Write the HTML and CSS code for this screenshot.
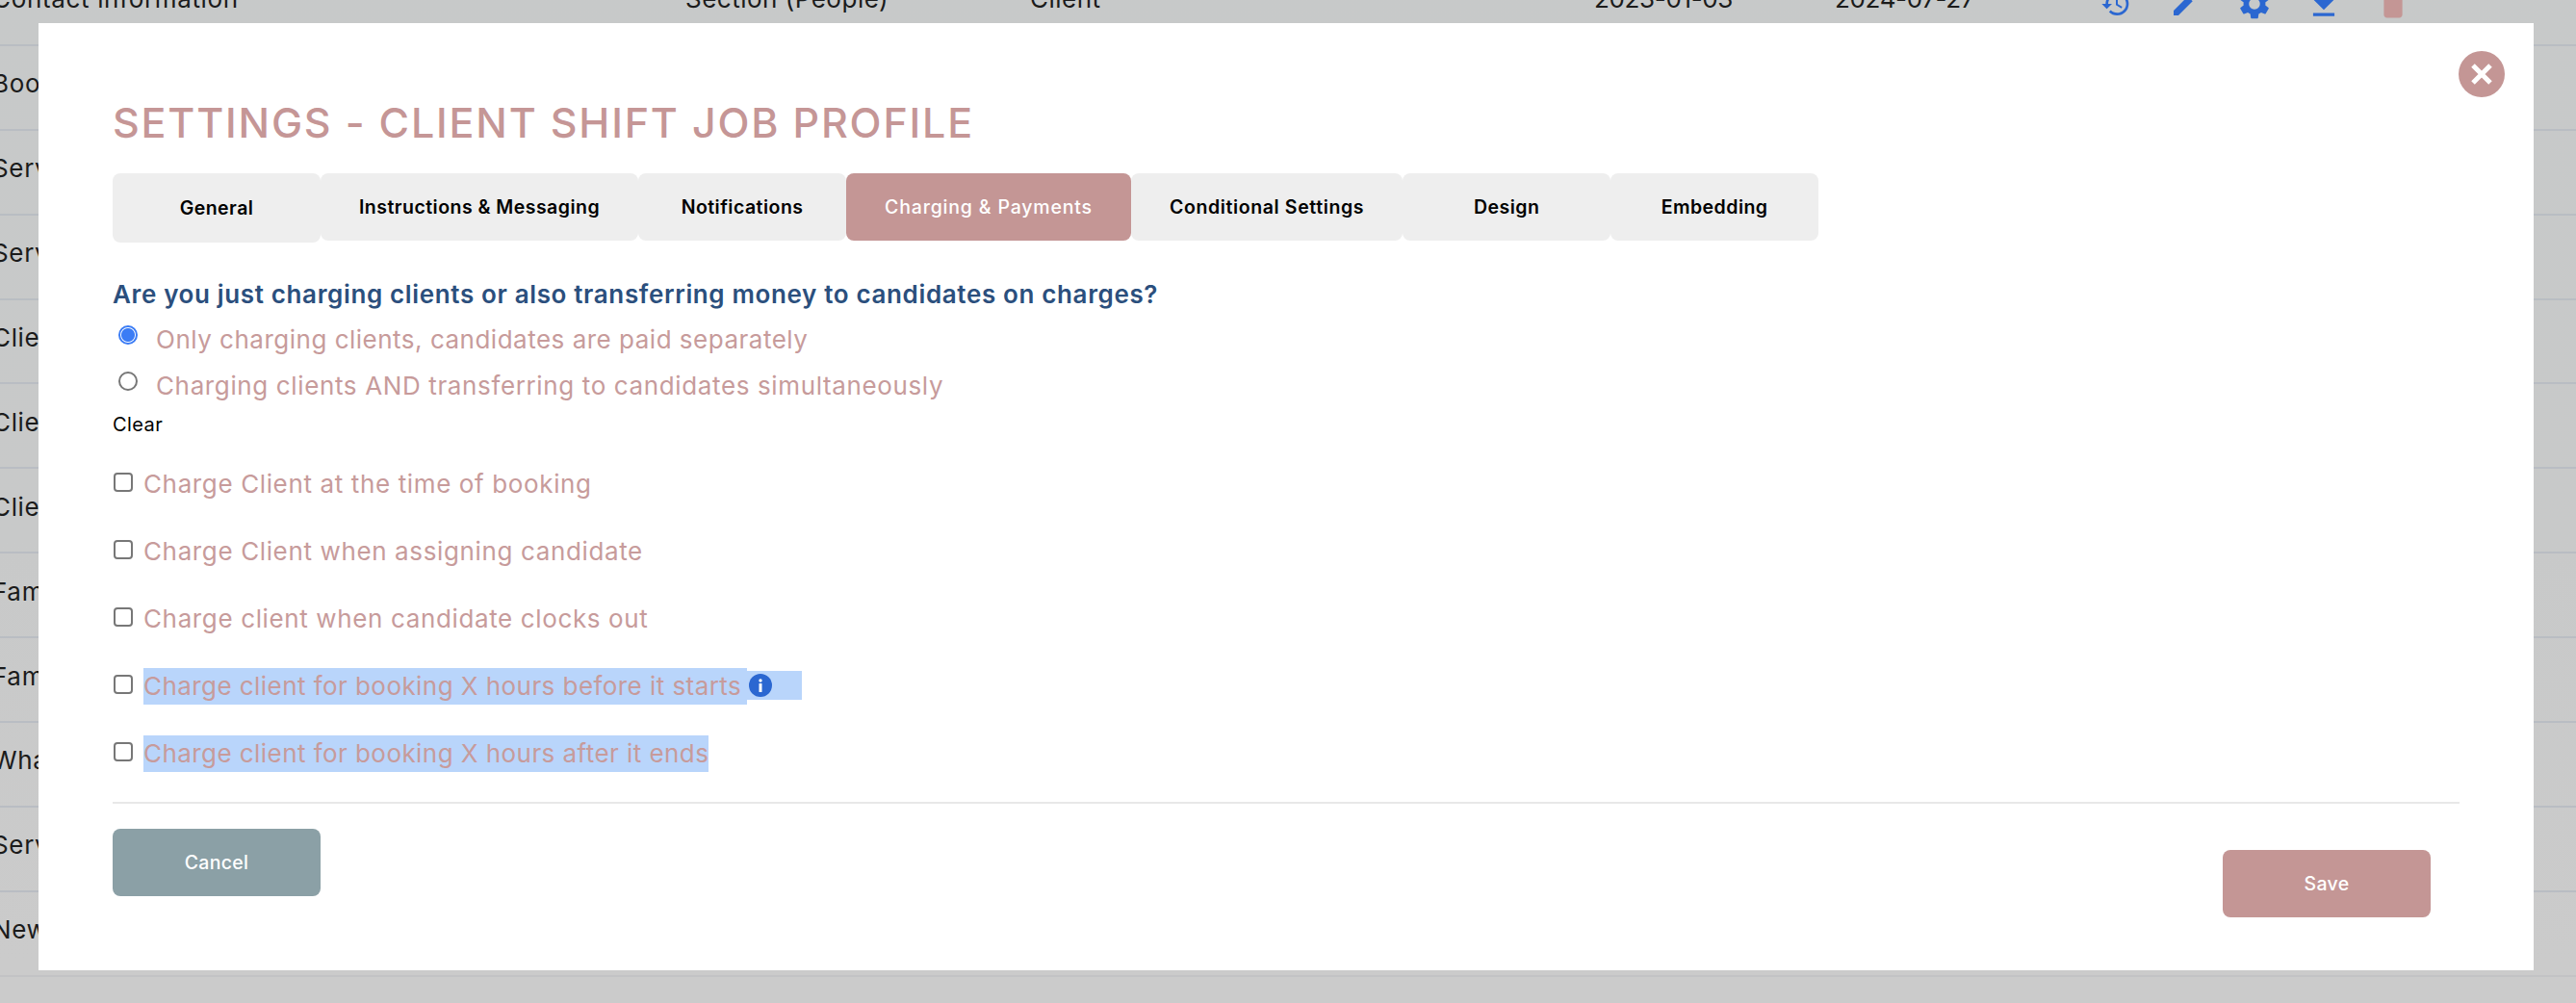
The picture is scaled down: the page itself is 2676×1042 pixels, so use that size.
FILE: index.html
```html
<!DOCTYPE html>
<html lang="en">
<head>
<meta charset="utf-8">
<title>Settings - Client Shift Job Profile</title>
<link rel="stylesheet" href="styles.css">
</head>
<body>
<main class="table">
  <div class="row">
    <span>Contact information</span><span>Section (People)</span><span>Client</span><span class="date">2023-01-03</span><span class="date">2024-07-27</span>
    <div class="icons">
      <svg class="ic" viewBox="0 0 24 24"><path d="M13 3a9 9 0 0 0-9 9H1l3.89 3.89.07.14L9 12H6c0-3.87 3.13-7 7-7s7 3.13 7 7-3.13 7-7 7c-1.93 0-3.68-.79-4.94-2.06l-1.42 1.42A8.954 8.954 0 0 0 13 21a9 9 0 0 0 0-18zm-1 5v5l4.28 2.54.72-1.21-3.5-2.08V8H12z"/></svg>
      <svg class="ic" viewBox="0 0 24 24"><path d="M3 17.25V21h3.75L17.81 9.94l-3.75-3.75L3 17.25zM20.71 7.04a1 1 0 0 0 0-1.41l-2.34-2.34a1 1 0 0 0-1.41 0l-1.83 1.83 3.75 3.75 1.83-1.83z"/></svg>
      <svg class="ic ic-big" viewBox="0 0 24 24"><path d="M19.14 12.94c.04-.3.06-.61.06-.94 0-.32-.02-.64-.07-.94l2.03-1.58a.49.49 0 0 0 .12-.61l-1.92-3.32a.488.488 0 0 0-.59-.22l-2.39.96c-.5-.38-1.03-.7-1.62-.94l-.36-2.54a.484.484 0 0 0-.48-.41h-3.84c-.24 0-.43.17-.47.41l-.36 2.54c-.59.24-1.13.57-1.62.94l-2.39-.96c-.22-.08-.47 0-.59.22L2.74 8.87c-.12.21-.08.47.12.61l2.03 1.58c-.05.3-.09.63-.09.94s.02.64.07.94l-2.03 1.58a.49.49 0 0 0-.12.61l1.92 3.32c.12.22.37.29.59.22l2.39-.96c.5.38 1.03.7 1.62.94l.36 2.54c.05.24.24.41.48.41h3.84c.24 0 .44-.17.47-.41l.36-2.54c.59-.24 1.13-.56 1.62-.94l2.39.96c.22.08.47 0 .59-.22l1.92-3.32c.12-.22.07-.47-.12-.61l-2.01-1.58zM12 15.6c-1.98 0-3.6-1.62-3.6-3.6s1.62-3.6 3.6-3.6 3.6 1.62 3.6 3.6-1.62 3.6-3.6 3.6z"/></svg>
      <svg class="ic ic-big" viewBox="0 0 24 24"><path d="M19 9h-4V3H9v6H5l7 7 7-7zM5 18v2h14v-2H5z"/></svg>
      <svg class="ic ic-del" viewBox="2 2 20 20"><path d="M6 19c0 1.1.9 2 2 2h8c1.1 0 2-.9 2-2V7H6v12zM19 4h-3.500l-1-1h-5l-1 1H5v2h14V4z"/></svg>
    </div>
  </div>
  <div class="row"><span>Booking</span></div>
  <div class="row"><span>Services</span></div>
  <div class="row"><span>Services</span></div>
  <div class="row"><span>Client</span></div>
  <div class="row"><span>Client</span></div>
  <div class="row"><span>Client</span></div>
  <div class="row"><span>Family</span></div>
  <div class="row"><span>Family</span></div>
  <div class="row"><span>What</span></div>
  <div class="row"><span>Services</span></div>
  <div class="row row-end"><span>New</span></div>
  <div class="row row-faded">
    <span></span><span></span><span></span><span></span><span></span>
    <div class="icons">
      <svg class="ic" viewBox="0 0 24 24"><path d="M13 3a9 9 0 0 0-9 9H1l3.89 3.89.07.14L9 12H6c0-3.87 3.13-7 7-7s7 3.13 7 7-3.13 7-7 7c-1.93 0-3.68-.79-4.94-2.06l-1.42 1.42A8.954 8.954 0 0 0 13 21a9 9 0 0 0 0-18z"/></svg>
      <svg class="ic" viewBox="0 0 24 24"><path d="M3 17.25V21h3.75L17.81 9.94l-3.75-3.75L3 17.25zM20.71 7.04a1 1 0 0 0 0-1.41l-2.34-2.34a1 1 0 0 0-1.41 0l-1.83 1.83 3.75 3.75 1.83-1.83z"/></svg>
      <svg class="ic ic-big" viewBox="0 0 24 24"><path d="M19.14 12.94c.04-.3.06-.61.06-.94 0-.32-.02-.64-.07-.94l2.03-1.58a.49.49 0 0 0 .12-.61l-1.92-3.32a.488.488 0 0 0-.59-.22l-2.39.96c-.5-.38-1.03-.7-1.62-.94l-.36-2.54a.484.484 0 0 0-.48-.41h-3.84c-.24 0-.43.17-.47.41l-.36 2.54c-.59.24-1.13.57-1.62.94l-2.39-.96c-.22-.08-.47 0-.59.22L2.74 8.87c-.12.21-.08.47.12.61l2.03 1.58c-.05.3-.09.63-.09.94s.02.64.07.94l-2.03 1.58a.49.49 0 0 0-.12.61l1.92 3.32c.12.22.37.29.59.22l2.39-.96c.5.38 1.03.7 1.62.94l.36 2.54c.05.24.24.41.48.41h3.84c.24 0 .44-.17.47-.41l.36-2.54c.59-.24 1.13-.56 1.62-.94l2.39.96c.22.08.47 0 .59-.22l1.92-3.32c.12-.22.07-.47-.12-.61l-2.01-1.58z"/></svg>
      <svg class="ic ic-big" viewBox="0 0 24 24"><path d="M19 9h-4V3H9v6H5l7 7 7-7zM5 18v2h14v-2H5z"/></svg>
      <svg class="ic ic-del" viewBox="2 2 20 20"><path d="M6 19c0 1.1.9 2 2 2h8c1.1 0 2-.9 2-2V7H6v12zM19 4h-3.500l-1-1h-5l-1 1H5v2h14V4z"/></svg>
    </div>
  </div>
</main>

<section class="modal">
  <button class="close" aria-label="Close">
    <svg viewBox="0 0 48 48"><path d="M15 15 33 33M33 15 15 33"/></svg>
  </button>
  <h1 class="title">SETTINGS - CLIENT SHIFT JOB PROFILE</h1>
  <nav class="tabs">
    <a class="tab tab-first">General</a>
    <a class="tab">Instructions &amp; Messaging</a>
    <a class="tab">Notifications</a>
    <a class="tab tab-active">Charging &amp; Payments</a>
    <a class="tab tab-cond">Conditional Settings</a>
    <a class="tab">Design</a>
    <a class="tab">Embedding</a>
  </nav>
  <h2 class="question">Are you just charging clients or also transferring money to candidates on charges?</h2>
  <div class="radios">
    <label class="radio"><input type="radio" name="mode" checked><span class="label">Only charging clients, candidates are paid separately</span></label>
    <label class="radio"><input type="radio" name="mode"><span class="label label-wide">Charging clients AND transferring to candidates simultaneously</span></label>
  </div>
  <div class="clear">Clear</div>
  <label class="check"><input type="checkbox"><span class="label label-wide">Charge Client at the time of booking</span></label>
  <label class="check"><input type="checkbox"><span class="label label-wide">Charge Client when assigning candidate</span></label>
  <label class="check"><input type="checkbox"><span class="label label-wide">Charge client when candidate clocks out</span></label>
  <label class="check"><input type="checkbox"><span class="label sel sel-trail">Charge client for booking X hours before it starts</span><span class="info-wrap"><svg class="info" viewBox="0 0 24 24"><circle cx="12" cy="12" r="12"/><circle class="info-i" cx="12" cy="7" r="1.700"/><rect class="info-i" x="10.500" y="10" width="3" height="9" rx="0.500"/></svg></span></label>
  <label class="check"><input type="checkbox"><span class="label sel">Charge client for booking X hours after it ends</span></label>
  <div class="divider"></div>
  <footer class="footer">
    <button class="btn btn-cancel">Cancel</button>
    <button class="btn btn-save">Save</button>
  </footer>
</section>
</body>
</html>
```
FILE: styles.css
```css
* { box-sizing: border-box; }
html, body { margin: 0; height: 100%; overflow: hidden; }
body {
  width: 2676px;
  height: 1042px;
  position: relative;
  background: #cbcbcb;
  font-family: Inter, "Liberation Sans", sans-serif;
  color: #1b1b1b;
}

/* page behind the dialog */
.table {
  height: 1082px;
  overflow: hidden;
  margin: -40px 0 0 -8px;
  background: linear-gradient(#c7c9c9 0, #c8c9c9 600px, #cbcbcb 1040px);
}
.row {
  display: grid;
  grid-template-columns: 720px 358px 586px 250px 274px 1fr;
  align-items: center;
  height: 87.9px;
  border-bottom: 2px solid #b9bdc3;
  font-size: 26px;
  letter-spacing: 0.500px;
  padding-bottom: 8px;
  white-space: nowrap;
}
.row > span:first-child { letter-spacing: 0.660px; }
.date { letter-spacing: -0.350px; }
.row-end { border-bottom-color: #c2c3c5; }
.row-faded { border-bottom: 0; background: #cbcbcb; }
.row-faded .icons { opacity: 0.22; margin-top: 6px; }
.icons { display: flex; align-items: center; gap: 40px; padding-left: 2px; margin-top: 10px; }
.ic { width: 32px; height: 32px; fill: #2b67d1; }
.ic-big { width: 38px; height: 38px; margin: 0 -3px; }
.ic-del { fill: #c49695; }

/* dialog */
.modal {
  position: absolute;
  left: 40px;
  top: 24px;
  width: 2592px;
  height: 984px;
  background: #fff;
  padding: 78px 77px 0;
}
.close {
  position: absolute;
  right: 30px;
  top: 29px;
  width: 48px;
  height: 48px;
  padding: 0;
  border: 0;
  border-radius: 50%;
  background: #c49695;
}
.close svg { display: block; width: 48px; height: 48px; fill: none; stroke: #fff; stroke-width: 5; }

.title {
  margin: 0;
  font-size: 43px;
  line-height: 50px;
  font-weight: 500;
  color: #c59696;
  letter-spacing: 1.800px;
}
.tabs { display: flex; align-items: flex-start; margin-top: 28px; }
.tab {
  display: flex;
  align-items: center;
  justify-content: center;
  height: 70px;
  min-width: 216px;
  padding: 0 40px;
  background: #eeeeee;
  border-radius: 8px;
  font-size: 19.500px;
  font-weight: 600;
  color: #000;
  letter-spacing: 0.470px;
}
.tab-first { height: 72px; }
.tab-cond { letter-spacing: 0.620px; }
.tab-active { background: #c49695; color: #fff; font-weight: 500; letter-spacing: 0.830px; }

.question {
  margin: 39px 0 3px;
  font-size: 26px;
  line-height: 30px;
  font-weight: 600;
  color: #2b4f7d;
  letter-spacing: 0.640px;
}
.label {
  display: inline-block;
  font-size: 26px;
  line-height: 38px;
  color: #c79b9b;
  letter-spacing: 0.500px;
  white-space: nowrap;
}
.label-wide { letter-spacing: 0.630px; }
.label.sel { letter-spacing: 0.440px; }
input {
  appearance: none;
  margin: 0;
  width: 20px;
  height: 20px;
  flex: none;
  background: #fff;
  border: 2px solid #777;
}
input[type="checkbox"] { border-radius: 4px; }
input[type="radio"] { border-radius: 50%; }
input[type="radio"]:checked {
  border-color: #3b7cf5;
  background: radial-gradient(circle, #3b7cf5 0, #3b7cf5 6.500px, #fff 7.500px);
}
.radio { display: flex; align-items: flex-start; height: 48px; padding: 10px 0 0 6px; gap: 19px; }
.radio input { margin-top: 4px; }
.clear { margin: 6px 0 8px; font-size: 20px; line-height: 30px; color: #000; letter-spacing: 0.400px; }
.check { display: flex; align-items: flex-start; height: 70px; padding: 20px 0 0 1px; gap: 11px; }
.check input { margin-top: 7px; }
.sel { background: #b9d5fb; }
.sel-trail { padding-right: 6px; }
.info-wrap {
  display: flex;
  align-items: center;
  width: 57px;
  height: 30px;
  margin: 3px 0 0 -11px;
  padding-left: 2px;
  background: #b9d5fb;
}
.info { width: 24px; height: 24px; fill: #2b67d1; }
.info .info-i { fill: #fff; }

.divider { height: 2px; margin-top: 19px; background: #e8e8e8; }
.footer { display: flex; justify-content: space-between; align-items: flex-start; padding: 26px 30px 0 0; }
.btn {
  width: 216px;
  height: 70px;
  border: 0;
  border-radius: 8px;
  color: #fff;
  font-family: inherit;
  font-size: 19.500px;
  font-weight: 500;
  letter-spacing: 0.300px;
}
.btn-cancel { background: #8ba0a6; }
.btn-save { background: #c49695; margin-top: 22px; }
```
